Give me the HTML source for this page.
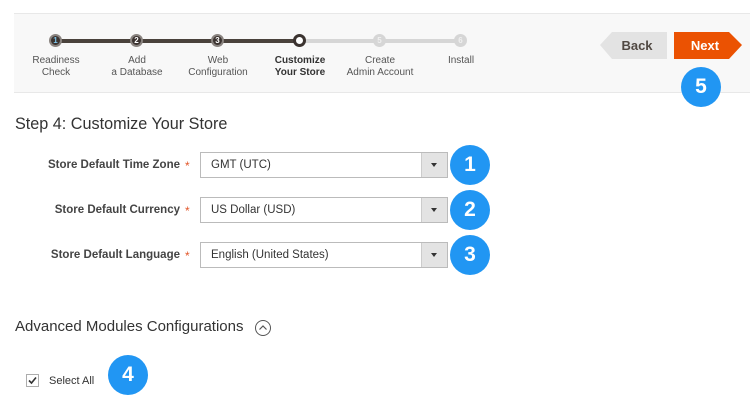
<!DOCTYPE html>
<html><head><style>
body{margin:0;width:750px;height:400px;background:#fff;font-family:"Liberation Sans",sans-serif;position:relative;overflow:hidden;color:#333}
.a{position:absolute}
.band{left:14px;top:13px;width:736px;height:78px;background:#f8f8f8;border-top:1px solid #e8e8e8;border-bottom:1px solid #e8e8e8}
.lbl{font-size:10px;color:#555;text-align:center;width:90px;line-height:12px}
.node{width:13px;height:13px;border-radius:50%;box-sizing:border-box;font-size:8px;font-weight:bold;display:flex;align-items:center;justify-content:center}
.badge{width:40px;height:40px;border-radius:50%;background:#2196f3;color:#fff;font-weight:bold;font-size:21px;text-align:center;line-height:40px}
.fl{font-size:11.5px;font-weight:bold;color:#444;text-align:right;width:180px}
.sel{width:248px;height:26px;border:1px solid #bbb;box-sizing:border-box;font-size:11.5px;color:#333;line-height:24px;padding-left:10px}
.sel::after{content:"";position:absolute;right:0;top:0;width:25px;height:24px;background:#e3e3e3;border-left:1px solid #ccc}
.car{position:absolute;right:10px;top:10px;width:0;height:0;border-left:3px solid transparent;border-right:3px solid transparent;border-top:4px solid #333;z-index:2}
.star{color:#e2572b;font-size:12px}
</style></head><body>
<div class="a band"></div>
<div class="a" style="left:56px;top:39px;width:244px;height:4px;background:#4a423c"></div>
<div class="a" style="left:300px;top:39px;width:161px;height:4px;background:#d6d6d6"></div>
<div class="a node" style="left:49px;top:34px;background:#3b3330;color:#7ec4e8;border:2px solid #8a8480">1</div>
<div class="a node" style="left:130px;top:34px;background:#3b3330;color:#fff;border:2px solid #8a8480">2</div>
<div class="a node" style="left:211px;top:34px;background:#3b3330;color:#fff;border:2px solid #8a8480">3</div>
<div class="a node" style="left:293px;top:34px;background:#fff;border:3px solid #3b3330"></div>
<div class="a node" style="left:373px;top:34px;background:#d6d6d6;color:#f0f0f0">5</div>
<div class="a node" style="left:454px;top:34px;background:#d6d6d6;color:#f0f0f0">6</div>
<div class="a lbl" style="left:11px;top:55px">Readiness<br>Check</div>
<div class="a lbl" style="left:92px;top:55px">Add<br>a Database</div>
<div class="a lbl" style="left:173px;top:55px">Web<br>Configuration</div>
<div class="a lbl" style="left:255px;top:55px;color:#333;font-weight:bold">Customize<br>Your Store</div>
<div class="a lbl" style="left:335px;top:55px">Create<br>Admin Account</div>
<div class="a lbl" style="left:416px;top:55px">Install</div>
<svg class="a" style="left:596px;top:31px" width="156" height="30"><polygon points="4,14 16,1 71,1 71,28 16,28" fill="#e3e3e3"/><polygon points="78,1 133,1 146,14 133,28 78,28" fill="#eb5202"/>
<text x="41" y="19" font-family="Liberation Sans" font-weight="bold" font-size="13" fill="#514943" text-anchor="middle">Back</text>
<text x="109" y="19" font-family="Liberation Sans" font-weight="bold" font-size="13" fill="#fff" text-anchor="middle">Next</text></svg>
<div class="a badge" style="left:681px;top:67px">5</div>
<div class="a" style="left:15px;top:115px;font-size:16.2px;color:#333">Step 4: Customize Your Store</div>

<div class="a fl" style="left:0;top:159px">Store Default Time Zone</div><div class="a star" style="left:185px;top:159px">*</div>
<div class="a sel" style="left:200px;top:152px">GMT (UTC)<span class="car"></span></div>
<div class="a badge" style="left:450px;top:145px">1</div>
<div class="a fl" style="left:0;top:204px">Store Default Currency</div><div class="a star" style="left:185px;top:204px">*</div>
<div class="a sel" style="left:200px;top:197px">US Dollar (USD)<span class="car"></span></div>
<div class="a badge" style="left:450px;top:190px">2</div>
<div class="a fl" style="left:0;top:249px">Store Default Language</div><div class="a star" style="left:185px;top:249px">*</div>
<div class="a sel" style="left:200px;top:242px">English (United States)<span class="car"></span></div>
<div class="a badge" style="left:450px;top:235px">3</div>

<div class="a" style="left:15px;top:318px;font-size:15px;color:#333">Advanced Modules Configurations</div>
<svg class="a" style="left:254px;top:319px" width="18" height="18"><circle cx="9" cy="9" r="7.5" fill="none" stroke="#555" stroke-width="1"/><path d="M5.5 10.5 L9 7 L12.5 10.5" fill="none" stroke="#555" stroke-width="1.2"/></svg>
<svg class="a" style="left:26px;top:374px" width="13" height="13"><rect x="0.5" y="0.5" width="12" height="12" fill="#fff" stroke="#adadad"/><path d="M3 6.5 L5.5 9 L10 3.5" fill="none" stroke="#333" stroke-width="1.6"/></svg>
<div class="a" style="left:49px;top:375px;font-size:11px;color:#333">Select All</div>
<div class="a badge" style="left:108px;top:355px">4</div>
</body></html>
